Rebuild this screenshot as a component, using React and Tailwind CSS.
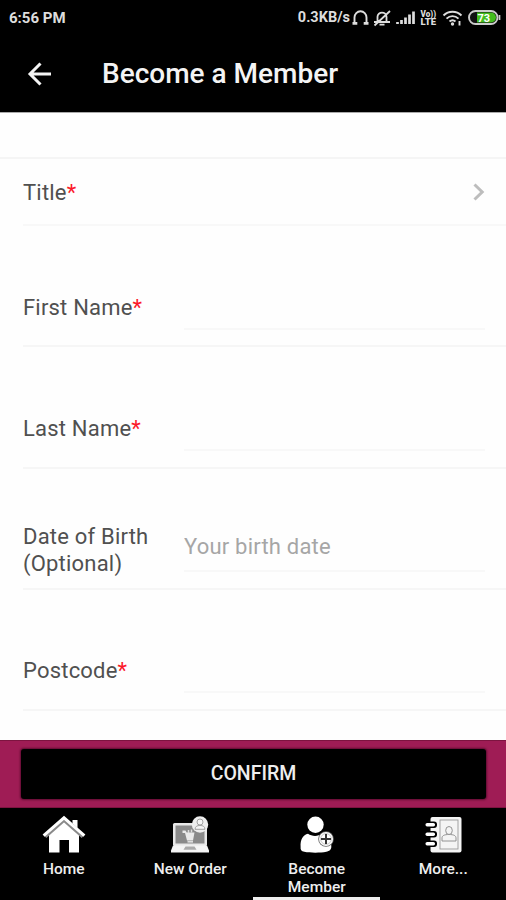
const FIELDS = [
  { id: "firstName", label: "First Name", required: true },
  { id: "lastName", label: "Last Name", required: true },
  { id: "dob", label: "Date of Birth (Optional)", placeholder: "Your birth date" },
  { id: "postcode", label: "Postcode", required: true },
];

const TABS = [
  { id: "home", label: "Home", icon: HomeIcon },
  { id: "order", label: "New Order", icon: OrderIcon },
  { id: "member", label: "Become Member", icon: MemberIcon, active: true },
  { id: "more", label: "More...", icon: MoreIcon },
];

function HomeIcon() {
  return (
    <svg viewBox="0 0 44 38" className="h-[38px] w-[44px]">
      <path d="M22 5 37 18V37.500H27V25H17.500V37.500H7V18z" fill="#fff" />
      <path d="M3 21.500 22 4.700 41 21.500" fill="none" stroke="#8a8a8a" strokeWidth="4" />
      <path d="M1.600 20.700 22 2.800 42.400 20.700" fill="none" stroke="#fff" strokeWidth="3" />
      <path d="M30.500 5h5v8l-5-4.400z" fill="#fff" />
    </svg>
  );
}

function OrderIcon() {
  return (
    <svg viewBox="0 0 40 38" className="h-[38px] w-[40px]">
      <rect x="3" y="8" width="34" height="23" rx="1.5" fill="#e8e8e8" />
      <rect x="5.5" y="10.5" width="29" height="18" fill="#8a8a8a" />
      <path d="M3 30.5h34l2 5v2H1v-2z" fill="#f5f5f5" />
      <path d="M15.5 31.5h9l2 3.2h-13z" fill="#aaa" />
      <path d="M12.5 15.5h3l1.2 2h7.8l-1.5 8h-6l-2-7.500h-2.500z" fill="#eaeaea" />
      <path d="M18.5 15v3M21.5 14.500v3" stroke="#ddd" strokeWidth="1.5" />
      <path d="M17.5 26.800h5.500" stroke="#ddd" strokeWidth="1.6" />
      <circle cx="30" cy="9.5" r="8.2" fill="#eee" />
      <circle cx="30" cy="7" r="3" fill="#f5f5f5" stroke="#999" strokeWidth="0.9" />
      <path d="M25 14.300c.3-3 2-3.800 5-3.800s4.700.8 5 3.800z" fill="#f5f5f5" stroke="#999" strokeWidth="0.9" />
    </svg>
  );
}

function MemberIcon() {
  return (
    <svg viewBox="0 0 36 38" className="h-[38px] w-[36px]">
      <circle cx="16.5" cy="9.8" r="8.2" fill="#fff" />
      <path
        d="M9 18.800c4 2.800 10 2.800 14 0 6 1 9 6 9.300 12 .4 4-2 5.400-5 6-6 1.200-16 1.200-22 0-3-.6-4-2-3.700-5C1.200 24.500 4 20 9 18.800z"
        fill="#fff"
      />
      <circle cx="27" cy="24" r="7.8" fill="#666" />
      <circle cx="27" cy="24" r="7" fill="#fff" />
      <circle cx="27" cy="24" r="5.4" fill="none" stroke="#bbb" strokeWidth="0.8" />
      <path d="M27 19v10M22 24h10" stroke="#333" strokeWidth="2" />
    </svg>
  );
}

function MoreIcon() {
  return (
    <svg viewBox="0 0 38 38" className="h-[38px] w-[38px]">
      <rect x="6.5" y="2" width="31" height="35.5" rx="2" fill="#f4f4f4" />
      {[9.5, 19, 28.5].map((y) => (
        <g key={y}>
          <rect x="0" y={y - 3} width="13" height="6.4" rx="3" fill="#000" />
          <rect x="1.5" y={y - 1.5} width="9.5" height="3.4" rx="1.6" fill="#fff" />
        </g>
      ))}
      <rect x="16" y="5" width="18" height="29" fill="none" stroke="#999" strokeWidth="0.9" />
      <g fill="#f4f4f4" stroke="#888" strokeWidth="0.9">
        <path d="M18 26v-3c0-2.200 2-3.500 7-3.500s7 1.300 7 3.500v3z" />
        <ellipse cx="25" cy="15.5" rx="3.3" ry="4" />
      </g>
    </svg>
  );
}

function StatusIcons() {
  return (
    <svg viewBox="0 0 154 24" className="h-6 w-[154px] shrink-0">
      {/* headphones */}
      <path d="M2.500 17V11.500a6 6.300 0 0 1 12 0v5.500" fill="none" stroke="#ddd" strokeWidth="1.9" />
      <path d="M0.500 17.300h4.800M11.700 17.300h4.800" stroke="#ddd" strokeWidth="2.8" />
      {/* muted bell */}
      <g fill="none" stroke="#ddd" strokeWidth="1.8">
        <path d="M25.500 15.800v-5c0-5.500 9-5.500 9 0v5M22 16h16M27.500 18.700h5M22.500 19.500 38 5" />
      </g>
      {/* signal */}
      <path
        d="M45.500 18v-2M49.500 18v-4M53.500 18v-6.500M57.500 18V8.500M61.500 18V5.500"
        stroke="#ddd"
        strokeWidth="2.7"
      />
      <g fill="#ddd" fontFamily="Roboto, sans-serif" fontWeight="900" fontSize="8.5">
        <text x="68.500" y="10.7" textLength="15.5" lengthAdjust="spacingAndGlyphs">Vo))</text>
        <text x="68.500" y="19" textLength="15.5" lengthAdjust="spacingAndGlyphs">LTE</text>
      </g>
      {/* wifi */}
      <g fill="none" stroke="#ddd" strokeWidth="1.9">
        <path d="M91.500 9.500c5-5 13-5 18 0M94.500 12.700c3.500-3.500 8.500-3.500 12 0M97.500 15.500c2-1.800 4-1.800 6 0" />
        <path d="M107.500 15v4.500" />
      </g>
      <circle cx="100.5" cy="18" r="1.7" fill="#ddd" />
      {/* battery */}
      <rect x="117" y="5" width="28.5" height="13" rx="6.5" fill="#111" stroke="#ccc" strokeWidth="1.9" />
      <path d="M125 6.500h14a5 5 0 0 1 0 10h-14z" fill="#43bd1d" />
      <path d="M147.500 9v5" stroke="#ccc" strokeWidth="1.7" />
      <text x="125.5" y="15.5" fill="#fff" fontFamily="Roboto, sans-serif" fontWeight="700" fontSize="11">
        73
      </text>
    </svg>
  );
}

function FieldLabel({ children, required }) {
  return (
    <span className="text-[22px] leading-[27px] tracking-[0.2px] text-[#505050]">
      {children}
      {required ? <span className="text-[#fb1a2a]">*</span> : null}
    </span>
  );
}

function FieldRow({ label, required, placeholder }) {
  return (
    <label className="ml-[23px] flex h-[121.25px] border-b-2 border-[#f6f6f6] pt-[53.5px]">
      <span className="flex h-[55px] w-[161px] shrink-0 items-center pr-6">
        <FieldLabel required={required}>{label}</FieldLabel>
      </span>
      <input
        type="text"
        placeholder={placeholder}
        className="mr-[21px] h-[50px] min-w-0 flex-1 border-b-2 border-[#f8f8f8] bg-transparent text-[22px] tracking-[0.2px] text-[#505050] outline-none placeholder:text-[#a6a6a6]"
      />
    </label>
  );
}

export default function App() {
  return (
    <div className="flex h-[900px] w-[506px] flex-col overflow-hidden bg-[#fefefe] font-['Roboto',sans-serif]">
      <header className="h-[113px] shrink-0 border-b border-[#aaa] bg-black text-[#f4f4f4]">
        <div className="flex h-9 items-center pl-[9px]">
          <span className="text-[15px] font-bold text-[#ddd]">6:56 PM</span>
          <span className="ml-auto text-[14.5px] font-bold text-[#ddd]">0.3KB/s</span>
          <span className="w-[2px]" />
          <StatusIcons />
        </div>
        <div className="flex h-[75px] items-center pl-[24px]">
          <svg viewBox="0 0 32 32" className="h-8 w-8">
            <path d="M27 16H6.500M16.500 5.500 6 16l10.500 10.500" fill="none" stroke="currentColor" strokeWidth="3" />
          </svg>
          <h1 className="ml-[46px] text-[28px] font-medium">Become a Member</h1>
        </div>
      </header>

      <main className="min-h-0 flex-1 overflow-hidden">
        <div className="h-[46px] border-b-2 border-[#f5f5f5]" />
        <button type="button" className="ml-[23px] flex h-[67px] w-[483px] items-center border-b-2 border-[#f8f8f8] pt-px pr-[21px]">
          <FieldLabel required>Title</FieldLabel>
          <svg viewBox="0 0 12 18" className="ml-auto h-[18px] w-3">
            <path d="m1.500 1.500 7.700 7.500-7.700 7.500" fill="none" stroke="#bdbdbd" strokeWidth="3" />
          </svg>
        </button>
        {FIELDS.map((field) => (
          <FieldRow key={field.id} {...field} />
        ))}
      </main>

      <div className="h-[68px] shrink-0 border-y border-[#7d1440] bg-[#9f1c55] pt-2 pr-5 pl-[21px]">
        <button
          type="button"
          className="flex h-[50px] w-full items-center justify-center rounded-[3px] bg-black text-[19.5px] font-medium text-[#eee] shadow-[0_0_2px_1px_rgba(50,0,25,0.6)]"
        >
          CONFIRM
        </button>
      </div>

      <nav className="grid h-[92px] shrink-0 grid-cols-4 bg-black">
        {TABS.map(({ id, label, icon: Icon, active }) => (
          <button
            key={id}
            type="button"
            className={`flex flex-col items-center border-b-[3px] pt-[7px] pl-px ${
              active ? "border-[#eee]" : "border-black"
            }`}
          >
            <Icon />
            <span className="mt-[7px] max-w-[90px] text-[15.5px] leading-[18px] font-medium text-[#eee]">{label}</span>
          </button>
        ))}
      </nav>
    </div>
  );
}
